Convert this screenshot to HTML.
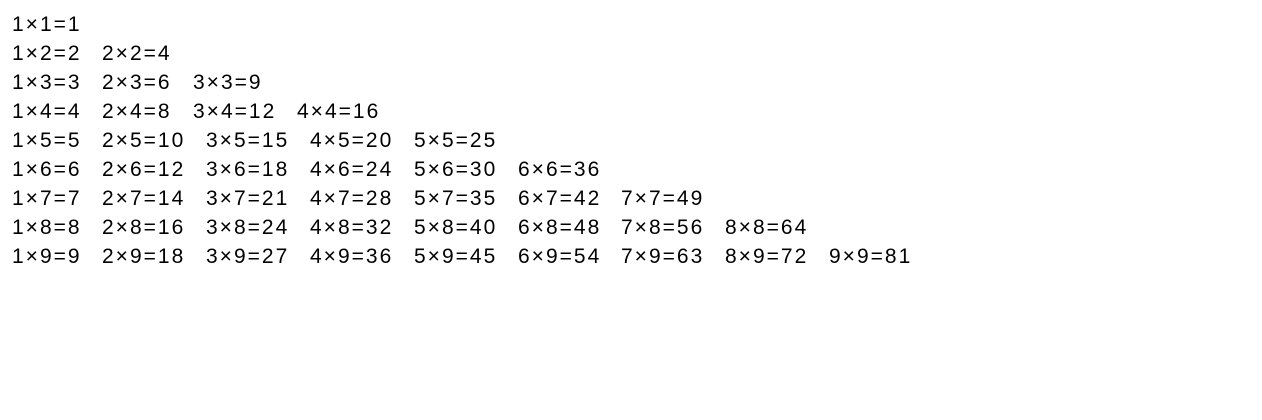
<!DOCTYPE html>
<html><head><meta charset="utf-8"><style>
html,body{margin:0;padding:0;background:#fff;width:1262px;height:420px;overflow:hidden}
body{position:relative;font-family:"Liberation Sans",sans-serif;font-size:21px;color:#000}
span{position:absolute;line-height:29px;letter-spacing:2px;white-space:nowrap}
</style></head><body>
<span style="left:12px;top:10px">1×1=1</span>

<span style="left:12px;top:39px">1×2=2</span>
<span style="left:102px;top:39px">2×2=4</span>

<span style="left:12px;top:68px">1×3=3</span>
<span style="left:102px;top:68px">2×3=6</span>
<span style="left:193px;top:68px">3×3=9</span>

<span style="left:12px;top:97px">1×4=4</span>
<span style="left:102px;top:97px">2×4=8</span>
<span style="left:193px;top:97px">3×4=12</span>
<span style="left:297px;top:97px">4×4=16</span>

<span style="left:12px;top:126px">1×5=5</span>
<span style="left:102px;top:126px">2×5=10</span>
<span style="left:206px;top:126px">3×5=15</span>
<span style="left:310px;top:126px">4×5=20</span>
<span style="left:414px;top:126px">5×5=25</span>

<span style="left:12px;top:155px">1×6=6</span>
<span style="left:102px;top:155px">2×6=12</span>
<span style="left:206px;top:155px">3×6=18</span>
<span style="left:310px;top:155px">4×6=24</span>
<span style="left:414px;top:155px">5×6=30</span>
<span style="left:518px;top:155px">6×6=36</span>

<span style="left:12px;top:184px">1×7=7</span>
<span style="left:102px;top:184px">2×7=14</span>
<span style="left:206px;top:184px">3×7=21</span>
<span style="left:310px;top:184px">4×7=28</span>
<span style="left:414px;top:184px">5×7=35</span>
<span style="left:518px;top:184px">6×7=42</span>
<span style="left:621px;top:184px">7×7=49</span>

<span style="left:12px;top:213px">1×8=8</span>
<span style="left:102px;top:213px">2×8=16</span>
<span style="left:206px;top:213px">3×8=24</span>
<span style="left:310px;top:213px">4×8=32</span>
<span style="left:414px;top:213px">5×8=40</span>
<span style="left:518px;top:213px">6×8=48</span>
<span style="left:621px;top:213px">7×8=56</span>
<span style="left:725px;top:213px">8×8=64</span>

<span style="left:12px;top:242px">1×9=9</span>
<span style="left:102px;top:242px">2×9=18</span>
<span style="left:206px;top:242px">3×9=27</span>
<span style="left:310px;top:242px">4×9=36</span>
<span style="left:414px;top:242px">5×9=45</span>
<span style="left:518px;top:242px">6×9=54</span>
<span style="left:621px;top:242px">7×9=63</span>
<span style="left:725px;top:242px">8×9=72</span>
<span style="left:829px;top:242px">9×9=81</span>
</body></html>
